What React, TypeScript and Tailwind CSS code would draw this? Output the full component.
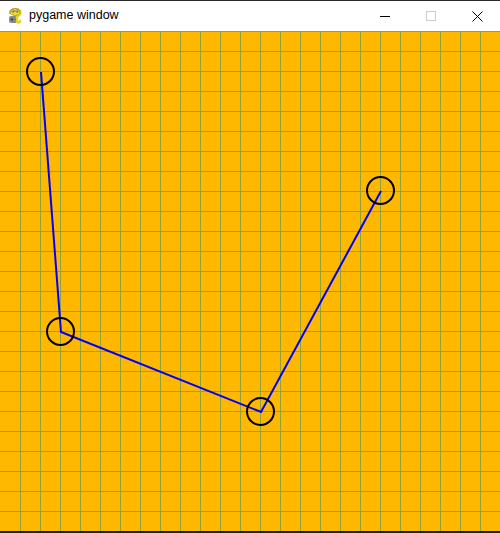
import React from 'react';

// points of the arm, in canvas coordinates (canvas is 500x500 under the title bar)
const joints = [
    { x: 40, y: 40 },
    { x: 60, y: 300 },
    { x: 260, y: 380 },
    { x: 380, y: 159 },
];

const grid = Array.from({ length: 25 }, (_, i) => i * 20);

function PygameIcon() {
    return (
        <svg width="18" height="18" viewBox="0 0 18 18">
            {/* joystick body */}
            <rect x="3" y="9" width="9" height="7" rx="2" fill="#8a8a8a" />
            <circle cx="6" cy="12.5" r="1.2" fill="#444" />
            <circle cx="9.5" cy="12.5" r="1" fill="#c33" />
            {/* snake head */}
            <path d="M4 6 C4 2 12 1 14 4 C15.5 6 14 9 11 9 L11 14 C11 16 14 16 14 14" fill="none" stroke="#e8d21a" strokeWidth="2.5" strokeLinecap="round" />
            <ellipse cx="9" cy="5" rx="5" ry="3.5" fill="#f0dc2a" stroke="#8a7a10" strokeWidth="0.6" />
            <circle cx="7" cy="4" r="1.3" fill="#fff" stroke="#333" strokeWidth="0.5" />
            <circle cx="11" cy="4" r="1.3" fill="#fff" stroke="#333" strokeWidth="0.5" />
            <circle cx="7.2" cy="4.2" r="0.5" fill="#000" />
            <circle cx="11.2" cy="4.2" r="0.5" fill="#000" />
        </svg>
    );
}

export default function App() {
    return (
        <div className="w-[500px] h-[533px] flex flex-col bg-[#1e1e1e] overflow-hidden">
            {/* title bar */}
            <div className="h-[31px] bg-white border-t border-[#2b2b2b] flex items-center shrink-0">
                <div className="ml-[6px] mr-[5px] flex items-center">
                    <PygameIcon />
                </div>
                <span className="text-[12.5px] text-black font-['Liberation_Sans',Arial,sans-serif] mt-[-1px]">pygame window</span>
                <div className="ml-auto flex h-full">
                    {/* minimise */}
                    <div className="w-[46px] h-full flex items-center justify-center">
                        <div className="w-[10px] h-px bg-black" />
                    </div>
                    {/* maximise (disabled) */}
                    <div className="w-[46px] h-full flex items-center justify-center">
                        <div className="w-[10px] h-[10px] border border-[#cccccc]" />
                    </div>
                    {/* close */}
                    <div className="w-[46px] h-full flex items-center justify-center">
                        <svg width="11" height="11" viewBox="0 0 11 11">
                            <path d="M0.5 0.5 L10.5 10.5 M10.5 0.5 L0.5 10.5" stroke="#000" strokeWidth="1" />
                        </svg>
                    </div>
                </div>
            </div>

            {/* canvas */}
            <svg width="500" height="500" viewBox="0 0 500 500" className="block shrink-0" shapeRendering="crispEdges">
                <rect x="0" y="0" width="500" height="500" fill="#ffb800" />
                {grid.map((v) => (
                    <line key={'h' + v} x1="0" y1={v + 0.5} x2="500" y2={v + 0.5} stroke="#8fa23c" strokeWidth="1" />
                ))}
                {grid.slice(1).map((v) => (
                    <line key={'v' + v} x1={v + 0.5} y1="0" x2={v + 0.5} y2="500" stroke="#8fa23c" strokeWidth="1" />
                ))}
                <g shapeRendering="auto">
                    <polyline
                        points={joints.map((p) => `${p.x + 1},${p.y + 1}`).join(' ')}
                        fill="none"
                        stroke="#0000ff"
                        strokeWidth="2"
                    />
                    {joints.map((p, i) => (
                        <circle key={i} cx={p.x + 0.5} cy={p.y + 0.5} r="13.5" fill="none" stroke="#000" strokeWidth="2" />
                    ))}
                </g>
            </svg>
        </div>
    );
}
